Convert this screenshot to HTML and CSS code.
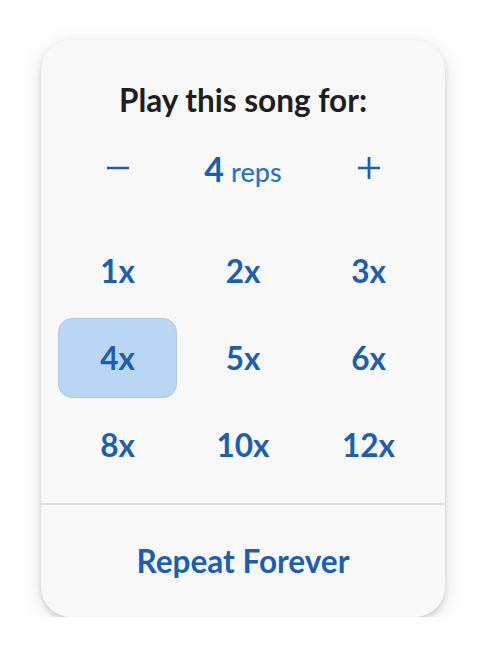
FILE: index.html
```html
<!DOCTYPE html>
<html>
<head>
<meta charset="utf-8">
<link rel="stylesheet" href="styles.css">
</head>
<body>
<div class="card">
  <div class="title">Play this song for:</div>
  <div class="stepper">
    <button class="step" aria-label="decrease">
      <svg width="24" height="24" viewBox="0 0 24 24"><path d="M1 12H23" stroke="#1b5fae" stroke-width="2.7"/></svg>
    </button>
    <div class="count"><span class="num">4</span> <span class="unit">reps</span></div>
    <button class="step" aria-label="increase">
      <svg width="24" height="24" viewBox="0 0 24 24"><path d="M1 12H23M12 1V23" stroke="#1b5fae" stroke-width="2.7"/></svg>
    </button>
  </div>
  <div class="grid">
    <button class="opt">1x</button>
    <button class="opt">2x</button>
    <button class="opt">3x</button>
    <button class="opt selected">4x</button>
    <button class="opt">5x</button>
    <button class="opt">6x</button>
    <button class="opt">8x</button>
    <button class="opt">10x</button>
    <button class="opt">12x</button>
  </div>
  <div class="footer">
    <button class="forever">Repeat Forever</button>
  </div>
</div>
</body>
</html>
```
FILE: styles.css
```css
* { box-sizing: border-box; }
html, body { margin: 0; padding: 0; background: #ffffff; }
body { font-family: Lato, "Noto Sans", sans-serif; }
button { font-family: inherit; border: none; background: none; padding: 0; cursor: pointer; }

.card {
  margin: 40px 0 0 41px;
  width: 404px;
  height: 577px;
  border-radius: 30px;
  background: #f8f8f8;
  box-shadow: 0 3px 5px rgba(0, 0, 0, 0.14), 0 4px 22px rgba(0, 0, 0, 0.12);
  display: flex;
  flex-direction: column;
  overflow: hidden;
}

.title {
  padding-top: 38px;
  height: 82px;
  line-height: 44px;
  text-align: center;
  font-size: 31.5px;
  font-weight: 700;
  color: #1e1e20;
}

.stepper {
  margin-top: 22px;
  height: 48px;
  padding: 0 17px;
  display: grid;
  grid-template-columns: repeat(3, 1fr);
  column-gap: 6.5px;
  align-items: center;
}
.step { display: flex; justify-content: center; align-items: center; height: 48px; }
.count { text-align: center; color: #1b5fae; white-space: nowrap; }
.num { font-size: 34px; font-weight: 700; margin-right: 3px; }
.unit { font-size: 27px; font-weight: 500; color: #2a73c6; }

.grid {
  margin-top: 39px;
  padding: 0 17px;
  display: grid;
  grid-template-columns: repeat(3, 1fr);
  grid-auto-rows: 80px;
  gap: 7px 6.5px;
}
.opt {
  border-radius: 14px;
  font-size: 31.5px;
  font-weight: 700;
  color: #1b5fae;
  border: 1px solid transparent;
}
.opt.selected {
  background: #b9d6f4;
  border-color: #aacaee;
}

.footer {
  margin-top: 18px;
  border-top: 2px solid #dcdee2;
  flex: 1;
  display: flex;
  justify-content: center;
  align-items: center;
}
.forever {
  font-size: 31.5px;
  font-weight: 700;
  color: #1b5fae;
}
```
